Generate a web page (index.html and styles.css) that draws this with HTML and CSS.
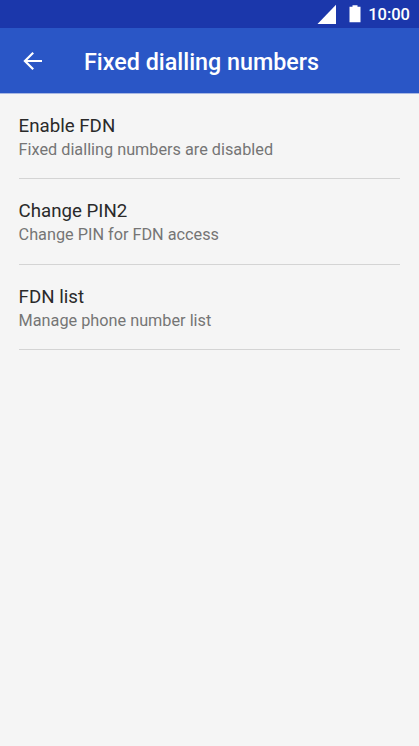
FILE: index.html
```html
<!DOCTYPE html>
<html lang="en">
<head>
<meta charset="utf-8">
<title>Fixed dialling numbers</title>
<link rel="stylesheet" href="styles.css">
</head>
<body>
<div class="status">
<svg class="signal" width="20" height="20" viewBox="0 0 20 20"><path d="M0.5 20H19V0.800z" fill="#fff"/></svg>
<svg class="battery" width="12" height="18" viewBox="0 0 12 18"><path d="M3.500 0.200h5v1.500H11.500v15.500H0.500v-15.500h3z" fill="#fff"/></svg>
<span class="time">10:00</span>
</div>
<header class="bar">
<svg class="back" width="20" height="20" viewBox="0 0 20 20"><path d="M19 10H2M10.200 1.700L1.900 10l8.300 8.300" fill="none" stroke="#fff" stroke-width="2.200"/></svg>
<h1 class="title">Fixed dialling numbers</h1>
</header>
<main class="list">
<section class="item"><h2 class="name">Enable FDN</h2><p class="desc">Fixed dialling numbers are disabled</p></section>
<section class="item"><h2 class="name">Change PIN2</h2><p class="desc">Change PIN for FDN access</p></section>
<section class="item"><h2 class="name">FDN list</h2><p class="desc">Manage phone number list</p></section>
</main>
</body>
</html>
```
FILE: styles.css
```css
* { box-sizing: border-box; }
body { margin: 0; min-height: 746px; background: #f5f5f5; font-family: Roboto, "Liberation Sans", sans-serif; }
h1, h2, p { margin: 0; font-weight: 400; white-space: nowrap; }
svg { display: block; flex: none; }
.status { height: 28px; background: #1b37ab; display: flex; align-items: center; justify-content: flex-end; padding-right: 9px; color: #fff; }
.battery { margin: 0 7px 0 12px; }
.time { font-size: 16.5px; font-weight: 500; line-height: 28px; padding-top: 2px; }
.bar { height: 66px; background: #2a56c6; display: flex; align-items: center; padding-left: 23px; border-bottom: 1px solid #a9b8e2; color: #fff; }
.title { margin-left: 41px; padding-top: 2px; font-size: 23.300px; font-weight: 500; line-height: 30px; }
.list { padding: 0 19px 0 18.600px; }
.item { height: 85.600px; padding-top: 20px; border-bottom: 1px solid #d4d4d4; }
.item:first-child { height: 85px; }
.name { font-size: 18.700px; line-height: 24px; color: #2a2a2a; }
.desc { padding-top: 1px; font-size: 16.260px; line-height: 22px; color: #757575; }
```
